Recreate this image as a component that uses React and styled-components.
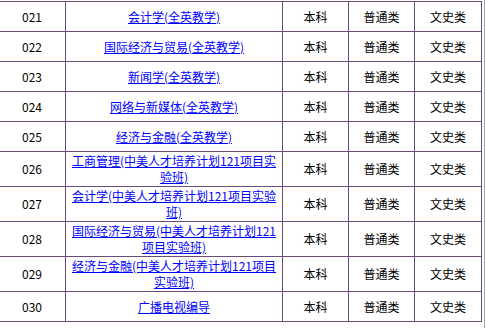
import React from "react";
import styled, { createGlobalStyle } from "styled-components";

const Global = createGlobalStyle`
  html, body { margin: 0; padding: 0; background: #fff; }
  body { font-family: "Noto Sans CJK SC", "Noto Sans", sans-serif; }
`;

const Frame = styled.div`
  width: 484px;
  height: 328px;
  border-right: 1px solid #a3a3a3;
  overflow: hidden;
  background: #fff;
`;

const Table = styled.table`
  border-collapse: collapse;
  table-layout: fixed;
  width: 483px;
  margin: 1px 0 0 -2px;
  font-size: 12px;
  line-height: 16px;
  color: #000;
`;

const Col = styled.col`
  width: ${(p) => p.$w}px;
`;

const Row = styled.tr`
  height: 30px;
`;

const Cell = styled.td`
  border: 1px solid #6b4d7b;
  padding: 1px 3px;
  text-align: center;
  vertical-align: middle;
`;

const Major = styled.a`
  color: #0000ff;
  text-decoration: underline;
`;

const columns = [67, 217, 66, 66, 67];

const rows = [
  ["021", "会计学(全英教学)"],
  ["022", "国际经济与贸易(全英教学)"],
  ["023", "新闻学(全英教学)"],
  ["024", "网络与新媒体(全英教学)"],
  ["025", "经济与金融(全英教学)"],
  ["026", "工商管理(中美人才培养计划121项目实验班)"],
  ["027", "会计学(中美人才培养计划121项目实验班)"],
  ["028", "国际经济与贸易(中美人才培养计划121项目实验班)"],
  ["029", "经济与金融(中美人才培养计划121项目实验班)"],
  ["030", "广播电视编导"],
];

export default function App() {
  return (
    <>
      <Global />
      <Frame>
        <Table>
          <colgroup>
            {columns.map((w, i) => (
              <Col key={i} $w={w} />
            ))}
          </colgroup>
          <tbody>
            {rows.map(([code, name]) => (
              <Row key={code}>
                <Cell>{code}</Cell>
                <Cell>
                  <Major href="#">{name}</Major>
                </Cell>
                <Cell>本科</Cell>
                <Cell>普通类</Cell>
                <Cell>文史类</Cell>
              </Row>
            ))}
          </tbody>
        </Table>
      </Frame>
    </>
  );
}
